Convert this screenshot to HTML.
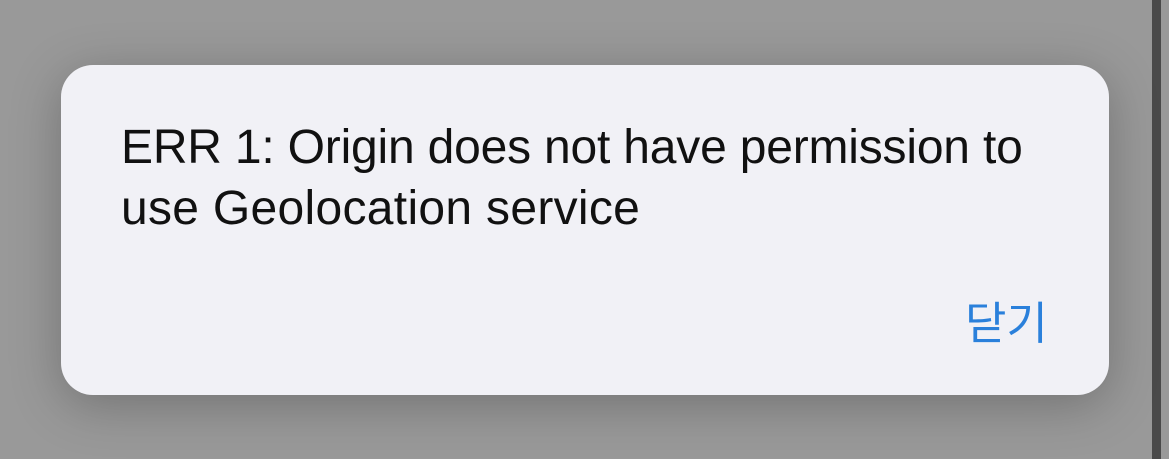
<!DOCTYPE html>
<html><head><meta charset="utf-8"><style>
html,body{margin:0;padding:0;}
body{width:1169px;height:459px;overflow:hidden;background:#999;position:relative;font-family:"Liberation Sans","Noto Sans CJK KR",sans-serif;}
.bar{position:absolute;left:1152px;top:0;width:9px;height:459px;background:#4a4a4a;}
.card{position:absolute;left:61px;top:65px;width:1048px;height:330px;background:#f1f1f6;border-radius:32px;box-shadow:0 10px 50px rgba(0,0,0,0.25);}
.msg{position:absolute;left:60px;top:52px;font-size:48px;line-height:61px;color:#111;width:1000px;white-space:nowrap;letter-spacing:-0.2px;}
.btn{position:absolute;left:904px;top:222px;font-size:45px;color:#2a80db;font-family:"Noto Sans CJK KR",sans-serif;}
</style></head><body>
<div class="bar"></div>
<div class="card">
<div class="msg">ERR 1: Origin does not have permission to<br><span style="letter-spacing:0.3px">use Geolocation service</span></div>
<div class="btn">닫기</div>
</div>
</body></html>
